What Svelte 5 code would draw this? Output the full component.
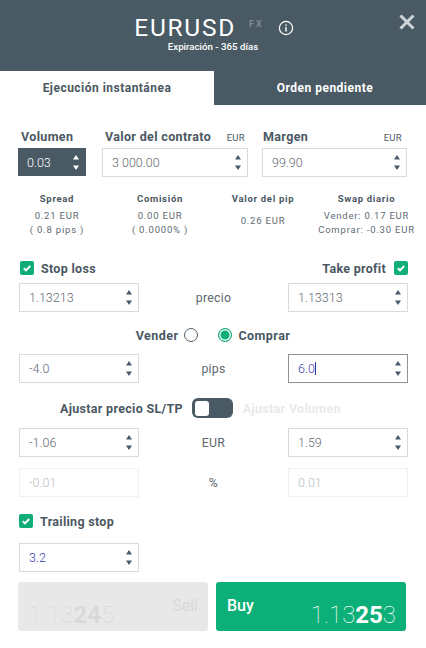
<script>
  const stats = [
    { t: 'Spread', l: ['0.21 EUR', '( 0.8 pips )'], w: 'a' },
    { t: 'Comisión', l: ['0.00 EUR', '( 0.0000% )'], w: 'b' },
    { t: 'Valor del pip', l: ['0.26 EUR'], w: 'c' },
    { t: 'Swap diario', l: ['Vender: 0.17 EUR', 'Comprar: -0.30 EUR'], w: 'd' }
  ];
</script>

{#snippet spin(color = '#48586a')}
  <svg class="spin" width="6" height="15" viewBox="0 0 6 15" aria-hidden="true">
    <path d="M3 0 L6 4.4 H0 Z M0 10.6 H6 L3 15 Z" fill={color} />
  </svg>
{/snippet}

{#snippet check()}
  <svg class="check" width="14" height="14" viewBox="0 0 14 14" aria-hidden="true">
    <rect width="14" height="14" rx="2" fill="#0fae79" />
    <path d="M3.8 7.2 L6 9.3 L10.2 5" fill="none" stroke="#fff" stroke-width="1.9" />
  </svg>
{/snippet}

<div class="page">
  <header class="head">
    <div class="title">
      <span class="sym">EURUSD</span>
      <span class="fx">FX</span>
      <svg class="info" width="16" height="16" viewBox="0 0 16 16" aria-hidden="true">
        <circle cx="8" cy="8" r="6.6" fill="none" stroke="#fff" stroke-width="1.2" />
        <rect x="7.3" y="7" width="1.4" height="4.6" fill="#fff" />
        <rect x="7.3" y="4.4" width="1.4" height="1.5" fill="#fff" />
      </svg>
    </div>
    <div class="exp">Expiración - 365 días</div>
    <svg class="close" width="16" height="16" viewBox="0 0 16 16" aria-hidden="true">
      <path d="M1.5 1.5 L14.5 14.5 M14.5 1.5 L1.5 14.5" stroke="#ced5d9" stroke-width="3" />
    </svg>
  </header>

  <div class="tabs">
    <div class="tab on">Ejecución instantánea</div>
    <div class="tab">Orden pendiente</div>
  </div>

  <div class="top">
    <div class="vol">
      <div class="lab">Volumen</div>
      <div class="box dark"><span>0.03</span>{@render spin('#fff')}</div>
    </div>
    <div class="val">
      <div class="lab l2">Valor del contrato<small>EUR</small></div>
      <div class="box"><span>3 000.00</span>{@render spin()}</div>
    </div>
    <div class="val">
      <div class="lab l3">Margen<small>EUR</small></div>
      <div class="box"><span>99.90</span>{@render spin()}</div>
    </div>
  </div>

  <div class="stats">
    {#each stats as s}
      <div class="stat {s.w}">
        <b>{s.t}</b>
        {#each s.l as x}<span>{x}</span>{/each}
      </div>
    {/each}
  </div>

  <div class="checks">
    <div class="cl">{@render check()}<span>Stop loss</span></div>
    <div class="cl">
      <span>Take profit</span>{@render check()}
    </div>
  </div>

  <div class="row r1">
    <div class="box w"><span>1.13213</span>{@render spin()}</div>
    <div class="mid">precio</div>
    <div class="box w"><span>1.13313</span>{@render spin()}</div>
  </div>

  <div class="radios">
    <span>Vender</span><i class="radio"></i>
    <i class="radio sel"></i><span>Comprar</span>
  </div>

  <div class="row r2">
    <div class="box w"><span>-4.0</span>{@render spin()}</div>
    <div class="mid">pips</div>
    <div class="box w focus"><span class="blue">6.0<i class="caret"></i></span>{@render spin()}</div>
  </div>

  <div class="adjust">
    <span>Ajustar precio SL/TP</span>
    <div class="toggle"><i></i></div>
    <span class="off">Ajustar Volumen</span>
  </div>

  <div class="row r3">
    <div class="box w"><span>-1.06</span>{@render spin()}</div>
    <div class="mid">EUR</div>
    <div class="box w"><span>1.59</span>{@render spin()}</div>
  </div>

  <div class="row r4">
    <div class="box w dis"><span>-0.01</span></div>
    <div class="mid">%</div>
    <div class="box w dis"><span>0.01</span></div>
  </div>

  <div class="trail">{@render check()}<span>Trailing stop</span></div>

  <div class="box w tbox"><span class="blue">3.2</span>{@render spin()}</div>

  <div class="btns">
    <div class="btn sell">
      <div class="price">1.13<b>24</b>5</div>
      <div class="side">Sell</div>
    </div>
    <div class="btn buy">
      <div class="side">Buy</div>
      <div class="price">1.13<b>25</b>3</div>
    </div>
  </div>
</div>

<style>
  :global(body) { margin: 0; background: #fff; }
  .page { width: 426px; height: 648px; overflow: hidden; font-family: Roboto, "Liberation Sans", sans-serif; color: #4a5862; background: #fff; }
  .head { position: relative; height: 71px; box-sizing: border-box; background: #495a64; color: #fff; text-align: center; padding-top: 14px; }
  .title { display: flex; justify-content: center; align-items: center; height: 27px; padding-left: 2px; }
  .sym { font-size: 24.5px; letter-spacing: 1.7px; line-height: 27px; }
  .fx { font-size: 9px; font-weight: 700; letter-spacing: 2px; color: #7d8b94; margin-left: 13px; margin-top: -7px; }
  .info { margin-left: 14px; margin-top: 1px; }
  .exp { font-size: 9.7px; font-weight: 500; line-height: 11px; margin-top: 0; }
  .close { position: absolute; left: 399px; top: 14px; }
  .tabs { display: flex; height: 34px; background: #495a64; }
  .tab { flex: 1; padding-left: 10px; text-align: center; font-size: 12px; font-weight: 700; letter-spacing: .48px; line-height: 34px; color: #fff; }
  .tab.on { flex: none; padding-left: 0; width: 214px; background: #fff; color: #4a5862; }
  .top { display: flex; margin: 24px 19px 0 18px; gap: 16px; }
  .vol { width: 68px; flex: none; }
  .val { width: 146px; flex: none; }
  .val + .val { margin-left: -2px; width: 145px; }
  .lab { display: flex; justify-content: space-between; align-items: baseline; font-size: 12.5px; font-weight: 700; letter-spacing: .35px; line-height: 16px; height: 19px; padding-left: 3px; padding-right: 1px; white-space: nowrap; }
  .lab.l2 { padding-right: 3px; }
  .lab.l3 { padding-left: 1px; padding-right: 5px; }
  .lab small { font-size: 9.5px; font-weight: 400; letter-spacing: .3px; }
  .box { display: flex; align-items: center; justify-content: space-between; box-sizing: border-box; height: 29px; border: 1px solid #d8dcde; background: #fff; padding: 0 6px 0 9px; font-size: 12.5px; font-weight: 300; color: #5f6a72; }
  .box.dark { background: #495a64; border-color: #495a64; color: #fff; height: 28px; padding-left: 8px; }
  .stats { position: relative; height: 52px; margin-top: 15px; }
  .stat { position: absolute; top: 0; transform: translateX(-50%); display: flex; flex-direction: column; align-items: center; font-size: 9.5px; letter-spacing: .8px; line-height: 14.5px; white-space: nowrap; color: #606b73; }
  .stat b { letter-spacing: .7px; color: #4a5862; margin-bottom: 2px; }
  .a { left: 57px; } .b { left: 160px; } .c { left: 263px; } .d { left: 366.5px; }
  .c span { margin-top: 5px; }
  .checks { display: flex; justify-content: space-between; align-items: center; margin: 15px 18px 0 20px; height: 18px; }
  .cl { display: flex; align-items: center; gap: 8px; font-size: 12.5px; font-weight: 700; letter-spacing: .3px; }
  .cl:first-child { gap: 7px; }
  .row { display: flex; justify-content: space-between; align-items: center; margin: 0 18px 0 19px; }
  .w { width: 120px; flex: none; }
  .mid { flex: 1; text-align: center; font-size: 12.3px; font-weight: 400; letter-spacing: .25px; color: #5c6870; }
  .r1 { margin-top: 6px; }
  .radios { display: flex; justify-content: center; align-items: center; height: 18px; margin-top: 14px; font-size: 12.5px; font-weight: 700; letter-spacing: .45px; gap: 6px; }
  .radio { box-sizing: border-box; width: 14px; height: 14px; border-radius: 50%; border: 1px solid #56636c; background: #fff; }
  .radio.sel { margin-left: 14px; border-color: #0fae79; box-shadow: inset 0 0 0 1.5px #fff; background: #0fae79; }
  .r2 { margin-top: 10px; }
  .focus { border-color: #8d9499; }
  .blue { color: #3b3fb0; }
  .caret { display: inline-block; width: 1px; height: 13px; background: #2a2fa0; vertical-align: -2px; }
  .adjust { position: relative; display: flex; align-items: center; height: 20px; margin-top: 15px; padding-left: 60px; font-size: 12.5px; font-weight: 700; letter-spacing: .3px; }
  .off { color: #e6eaec; margin-left: 10px; }
  .toggle { box-sizing: border-box; width: 41px; height: 20px; border-radius: 6px; background: #495a64; margin-left: 9px; padding: 3px 0 0 3px; }
  .toggle i { display: block; width: 14px; height: 15px; border-radius: 3px; background: #fff; }
  .r3 { margin-top: 10px; }
  .r4 { margin-top: 11px; }
  .dis { border-color: #eff1f2; color: #b9bec2; }
  .trail { display: flex; align-items: center; gap: 7px; height: 18px; margin: 15px 0 0 19px; font-size: 12.5px; font-weight: 700; letter-spacing: .3px; }
  .tbox { margin: 13px 0 0 19px; }
  .btns { display: flex; gap: 8px; margin: 10px 0 0 18px; }
  .btn { box-sizing: border-box; width: 190px; height: 49px; border-radius: 3px; display: flex; justify-content: space-between; padding: 0 10px 0 11px; }
  .sell { background: #e8e8e8; color: #d9d9d9; }
  .buy { background: #0caf78; color: #fff; }
  .side { font-size: 16px; font-weight: 400; line-height: 18px; margin-top: 15px; }
  .buy .side { font-weight: 500; }
  .price { font-size: 24px; font-weight: 100; line-height: 28px; margin-top: 19px; }
  .price b { font-weight: 700; }
</style>
